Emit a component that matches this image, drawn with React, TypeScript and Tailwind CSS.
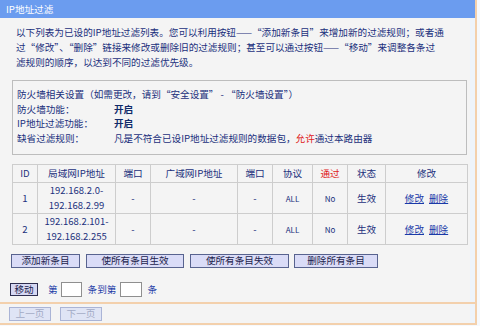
export default function App() {
  const rows = [
    { id: "1", lan: ["192.168.2.0-", "192.168.2.99"] },
    { id: "2", lan: ["192.168.2.101-", "192.168.2.255"] },
  ];
  return (
    <div className="w-[480px] h-[326px] overflow-hidden bg-[#f6f9fd] font-['Noto_Sans_CJK_SC',sans-serif] text-[9.6px] text-[#1b307c]">
      <div className="w-[477px] h-[325px] border-r-2 border-[#f3d0ac] flex flex-col">
        <div className="h-[18px] bg-[#6b9cef] text-white leading-[18px] pl-[6px] shrink-0">IP地址过滤</div>
        <div className="flex h-[284px] shrink-0">
          <div className="w-[470px] bg-[#f4f4f4] flex flex-col">
            <div className="pl-[16px] pt-[7px] leading-[15px] whitespace-nowrap">
              <div>以下列表为已设的IP地址过滤列表。您可以利用按钮——“添加新条目”来增加新的过滤规则；或者通</div>
              <div>过“修改”、“删除”链接来修改或删除旧的过滤规则；甚至可以通过按钮——“移动”来调整各条过</div>
              <div>滤规则的顺序，以达到不同的过滤优先级。</div>
            </div>
            <div className="ml-[12px] mt-[10px] w-[455px] h-[75px] border border-[#bdbdbd] pl-[4px] pt-[6px] leading-[14.5px] whitespace-nowrap">
              <div>防火墙相关设置（如需更改，请到“安全设置” - “防火墙设置”）</div>
              <div className="flex"><span className="w-[97px]">防火墙功能：</span><span className="font-bold text-[#102a6a]">开启</span></div>
              <div className="flex"><span className="w-[97px]">IP地址过滤功能：</span><span className="font-bold text-[#102a6a]">开启</span></div>
              <div className="flex"><span className="w-[97px]">缺省过滤规则：</span><span>凡是不符合已设IP地址过滤规则的数据包，<span className="text-[#e02020]">允许</span>通过本路由器</span></div>
            </div>
            <table className="ml-[12px] mt-[9px] w-[455px] table-fixed border-collapse border border-[#a9a9a9] text-center leading-[15px]">
              <colgroup>
                <col className="w-[25px]" />
                <col className="w-[78px]" />
                <col className="w-[35px]" />
                <col className="w-[87px]" />
                <col className="w-[35px]" />
                <col className="w-[40px]" />
                <col className="w-[35px]" />
                <col className="w-[38px]" />
                <col className="w-[82px]" />
              </colgroup>
              <thead>
                <tr className="h-[18px]">
                  <th className="border border-[#cdcdcd] font-normal">ID</th>
                  <th className="border border-[#cdcdcd] font-normal">局域网IP地址</th>
                  <th className="border border-[#cdcdcd] font-normal">端口</th>
                  <th className="border border-[#cdcdcd] font-normal">广域网IP地址</th>
                  <th className="border border-[#cdcdcd] font-normal">端口</th>
                  <th className="border border-[#cdcdcd] font-normal">协议</th>
                  <th className="border border-[#cdcdcd] font-normal text-[#e02020]">通过</th>
                  <th className="border border-[#cdcdcd] font-normal">状态</th>
                  <th className="border border-[#cdcdcd] font-normal">修改</th>
                </tr>
              </thead>
              <tbody>
                {rows.map((r) => (
                  <tr key={r.id} className="h-[30px]">
                    <td className="border border-[#cdcdcd]">{r.id}</td>
                    <td className="border border-[#cdcdcd] text-[9.5px]">
                      <div>{r.lan[0]}</div>
                      <div>{r.lan[1]}</div>
                    </td>
                    <td className="border border-[#cdcdcd]">-</td>
                    <td className="border border-[#cdcdcd]">-</td>
                    <td className="border border-[#cdcdcd]">-</td>
                    <td className="border border-[#cdcdcd] text-[8px]">ALL</td>
                    <td className="border border-[#cdcdcd] text-[8px]">No</td>
                    <td className="border border-[#cdcdcd]">生效</td>
                    <td className="border border-[#cdcdcd]">
                      <span className="underline text-[#1a3aa8]">修改</span>
                      <span className="underline text-[#1a3aa8] ml-[5px]">删除</span>
                    </td>
                  </tr>
                ))}
              </tbody>
            </table>
            <div className="flex mt-[9px] ml-[11px] gap-[6px]">
              <button className="h-[14px] w-[69px] border border-[#58638f] bg-[#dadcf7] leading-none text-[#1c1c4c]">添加新条目</button>
              <button className="h-[14px] w-[98px] border border-[#58638f] bg-[#dadcf7] leading-none text-[#1c1c4c]">使所有条目生效</button>
              <button className="h-[14px] w-[99px] border border-[#58638f] bg-[#dadcf7] leading-none text-[#1c1c4c]">使所有条目失效</button>
              <button className="h-[14px] w-[84px] ml-[-1px] border border-[#58638f] bg-[#dadcf7] leading-none text-[#1c1c4c]">删除所有条目</button>
            </div>
            <div className="flex items-center mt-[14px] ml-[10px] h-[15px] text-[#1f40a8]">
              <button className="h-[13px] w-[28px] border border-[#2e2e50] bg-[#d6d8f3] leading-none text-[#1c1c4c]">移动</button>
              <span className="ml-[10px]">第</span>
              <span className="ml-[3px] w-[21px] h-[15px] border border-[#8f8f8f] bg-white" />
              <span className="ml-[6px]">条到第</span>
              <span className="ml-[4px] w-[22px] h-[15px] border border-[#8f8f8f] bg-white" />
              <span className="ml-[5px]">条</span>
            </div>
          </div>
          <div className="flex-1 bg-[#eef4fb]" />
        </div>
        <div className="h-[2px] bg-[#f3d0ac] shrink-0" />
        <div className="flex h-[19px] shrink-0">
          <div className="w-[470px] bg-[#f4f4f4] flex items-center pl-[9px] gap-[9px]">
            <button className="h-[14px] w-[42px] border border-[#aab4d6] bg-[#dfe4f5] leading-none text-[#a3abc6]">上一页</button>
            <button className="h-[14px] w-[42px] border border-[#aab4d6] bg-[#dfe4f5] leading-none text-[#a3abc6]">下一页</button>
          </div>
          <div className="flex-1 bg-[#eef4fb]" />
        </div>
        <div className="h-[2px] bg-[#f3d0ac] shrink-0" />
      </div>
    </div>
  );
}
